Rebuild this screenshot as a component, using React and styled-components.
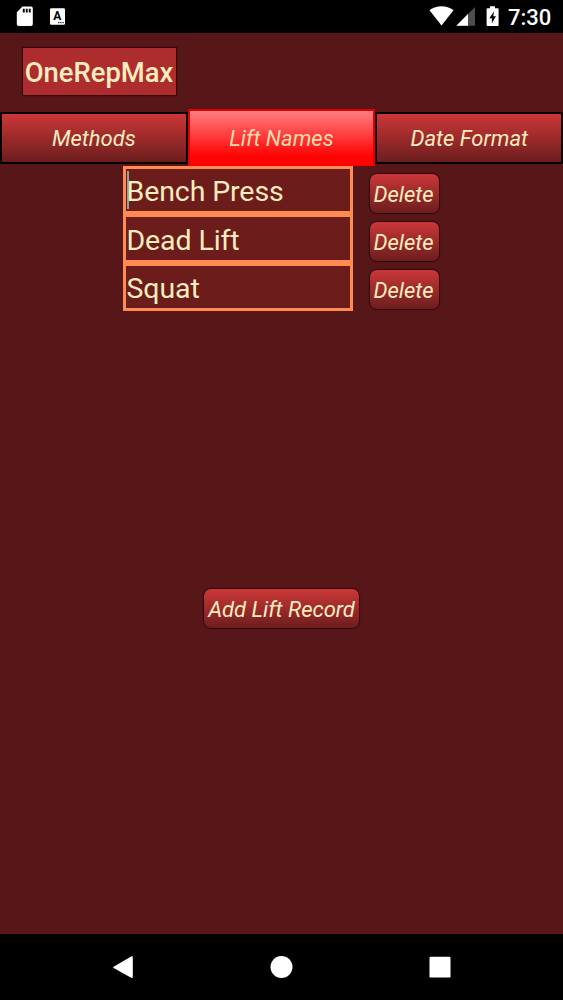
import styled, { createGlobalStyle } from 'styled-components'

const GlobalStyle = createGlobalStyle`
  * {
    box-sizing: border-box;
  }
  body {
    margin: 0;
    background-color: #571719;
    font-family: Roboto, sans-serif;
  }
`

const Container = styled.div`
  display: flex;
  flex-direction: column;
  height: 1000px;
  overflow: hidden;
  background-color: #571719;
  color: #ffecbf;
`

const StatusBar = styled.div`
  display: flex;
  align-items: center;
  justify-content: space-between;
  flex: none;
  height: 33px;
  background-color: #000;
`

const StatusIcon = styled.svg`
  display: block;
  height: 33px;
  width: ${(props) => props.$width}px;
`

const StatusGroup = styled.div`
  display: flex;
  align-items: center;
`

const Clock = styled.span`
  width: 55px;
  padding-top: 2px;
  color: #fff;
  font-size: 22px;
  line-height: 31px;
  font-weight: 500;
`

const Header = styled.div`
  flex: none;
  height: 76px;
  padding: 14px 22px 0;
`

const Title = styled.h1`
  width: 155px;
  height: 49px;
  margin: 0;
  padding-right: 1px;
  border: 1px solid #3a0507;
  box-shadow: 0 0 1px #3a0507;
  background-color: #ad2d2e;
  font-size: 27.4px;
  line-height: 50px;
  font-weight: 500;
  text-align: center;
  white-space: nowrap;
`

const Tabs = styled.div`
  display: flex;
  align-items: center;
  flex: none;
  height: 57px;
`

const Tab = styled.button`
  flex: 1;
  height: ${(props) => (props.$active ? '57px' : '52px')};
  padding: 2px 0 0;
  border: ${(props) => (props.$active ? '2px solid #e00004' : '2px solid #080000')};
  border-bottom-color: ${(props) => (props.$active ? '#ff0000' : '#080000')};
  background: ${(props) =>
    props.$active ? 'linear-gradient(#ff7f80, #ff0404 85%)' : 'linear-gradient(#cc3737, #6c1d1e)'};
  background-clip: padding-box;
  color: ${(props) => (props.$active ? '#ffdcae' : '#ffecbf')};
  font-family: inherit;
  font-size: 22px;
  font-style: italic;
`

const List = styled.div`
  display: flex;
  flex-direction: column;
  flex: none;
  height: 422px;
`

const Row = styled.div`
  display: flex;
  align-items: center;
  flex: none;
  height: 48.4px;
  padding-left: 123px;
`

const Field = styled.div`
  display: flex;
  align-items: center;
  width: 230px;
  height: 48.4px;
  border: 3px solid #ff8b52;
  background-color: #6b1c1b;
  font-size: 28.5px;
  letter-spacing: -0.1px;
  line-height: 40px;
  white-space: nowrap;
`

const Caret = styled.span`
  width: 2px;
  height: 38px;
  margin: 0 -3px 0 1px;
  background-color: #80aaa0;
`

const FieldText = styled.span`
  padding: 4px 0 0 0.5px;
`

const Button = styled.button`
  width: ${(props) => props.$width}px;
  height: 41px;
  padding: 2px 0 0;
  border: 1px solid #35090b;
  border-radius: 8px;
  box-shadow: 0 0 1px #35090b;
  background: linear-gradient(#cc3737, #6c1d1e);
  color: #ffecbf;
  font-family: inherit;
  font-size: 22px;
  font-style: italic;
  white-space: nowrap;
`

const DeleteButton = styled(Button)`
  margin: 6px 0 0 15.5px;
  padding-right: 1px;
`

const Footer = styled.div`
  display: flex;
  justify-content: center;
  flex: 1;
`

const NavBar = styled.div`
  flex: none;
  height: 66px;
  background-color: #000;
`

const lifts = ['Bench Press', 'Dead Lift', 'Squat']

const App = () => {
  return (
    <Container>
      <GlobalStyle />
      <StatusBar>
        <StatusIcon $width={80} viewBox="0 0 80 33">
          <path
            fill="#fff"
            fillRule="evenodd"
            d="M22.5 6.5H31a1.8 1.8 0 0 1 1.8 1.8v16a1.8 1.8 0 0 1-1.8 1.8H18.6a1.8 1.8 0 0 1-1.8-1.8V12.2zM22.8 8.8v3.8h1.9V8.8zm3 0v3.8h1.9V8.8zm3 0v3.8h1.9V8.8z"
          />
          <rect x="50" y="8.2" width="15" height="16.6" rx="1.2" fill="#fff" />
          <text x="57.4" y="20.4" fontSize="12" fontWeight="700" textAnchor="middle" fill="#000">
            A
          </text>
          <path d="M58 22.7h6" stroke="#000" strokeWidth="1" strokeDasharray="1.4 .8" />
        </StatusIcon>
        <StatusGroup>
          <StatusIcon $width={80} viewBox="428 0 80 33">
            <path d="M429.5 10.2C436.5 5 446.5 5 453.5 10.2L441.5 25.5z" fill="#fff" />
            <path d="M475 7V25.7H456.3z" fill="#4d4d4d" />
            <path d="M468 14V25.7H456.3z" fill="#fff" />
            <path
              fill="#fff"
              fillRule="evenodd"
              d="M490 6.3h5v2h2.6a1 1 0 0 1 1 1v15.8a1 1 0 0 1-1 1h-10a1 1 0 0 1-1-1V9.3a1 1 0 0 1 1-1h2.4zM494 11.5l-4.7 6.7h2.6v5l4.1-7h-2.7z"
            />
          </StatusIcon>
          <Clock>7:30</Clock>
        </StatusGroup>
      </StatusBar>
      <Header>
        <Title>OneRepMax</Title>
      </Header>
      <Tabs>
        <Tab>Methods</Tab>
        <Tab $active>Lift Names</Tab>
        <Tab>Date Format</Tab>
      </Tabs>
      <List>
        {lifts.map((lift, i) => (
          <Row key={lift}>
            <Field>
              {i === 0 && <Caret />}
              <FieldText>{lift}</FieldText>
            </Field>
            <DeleteButton $width={71}>Delete</DeleteButton>
          </Row>
        ))}
      </List>
      <Footer>
        <Button $width={157}>Add Lift Record</Button>
      </Footer>
      <NavBar>
        <svg width="563" height="66" viewBox="0 934 563 66">
          <path
            d="M132 957v20.2L114 967.4z"
            fill="#fff"
            stroke="#fff"
            strokeWidth="1.6"
            strokeLinejoin="round"
          />
          <circle cx="281.5" cy="967" r="11" fill="#fff" />
          <rect x="429.5" y="956.8" width="21" height="20.8" rx="1.2" fill="#fff" />
        </svg>
      </NavBar>
    </Container>
  )
}

export default App
